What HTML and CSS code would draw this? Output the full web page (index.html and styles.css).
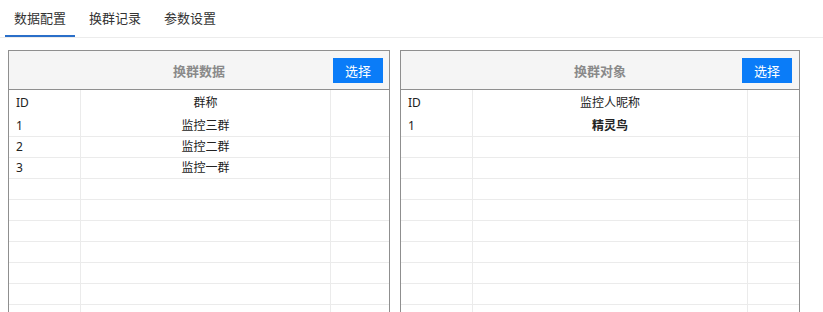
FILE: index.html
```html
<!DOCTYPE html>
<html>
<head>
  <link rel="stylesheet" href="styles.css">
</head>
<body>
  <div class="tabs">
    <div class="tab active">数据配置</div>
    <div class="tab">换群记录</div>
    <div class="tab">参数设置</div>
  </div>

  <div class="panels">
    <div class="panel panel-left">
      <div class="panel-head">
        <span class="panel-title">换群数据</span>
        <button class="btn">选择</button>
      </div>
      <div class="grid">
        <div class="row row-head"><div class="cell">ID</div><div class="cell center">群称</div><div class="cell"></div></div>
        <div class="row"><div class="cell">1</div><div class="cell center">监控三群</div><div class="cell"></div></div>
        <div class="row"><div class="cell">2</div><div class="cell center">监控二群</div><div class="cell"></div></div>
        <div class="row"><div class="cell">3</div><div class="cell center">监控一群</div><div class="cell"></div></div>
        <div class="row"><div class="cell"></div><div class="cell"></div><div class="cell"></div></div>
        <div class="row"><div class="cell"></div><div class="cell"></div><div class="cell"></div></div>
        <div class="row"><div class="cell"></div><div class="cell"></div><div class="cell"></div></div>
        <div class="row"><div class="cell"></div><div class="cell"></div><div class="cell"></div></div>
        <div class="row"><div class="cell"></div><div class="cell"></div><div class="cell"></div></div>
        <div class="row"><div class="cell"></div><div class="cell"></div><div class="cell"></div></div>
        <div class="row"><div class="cell"></div><div class="cell"></div><div class="cell"></div></div>
      </div>
    </div>

    <div class="panel panel-right">
      <div class="panel-head">
        <span class="panel-title">换群对象</span>
        <button class="btn">选择</button>
      </div>
      <div class="grid">
        <div class="row row-head"><div class="cell">ID</div><div class="cell center">监控人昵称</div><div class="cell"></div></div>
        <div class="row"><div class="cell">1</div><div class="cell center strong">精灵鸟</div><div class="cell"></div></div>
        <div class="row"><div class="cell"></div><div class="cell"></div><div class="cell"></div></div>
        <div class="row"><div class="cell"></div><div class="cell"></div><div class="cell"></div></div>
        <div class="row"><div class="cell"></div><div class="cell"></div><div class="cell"></div></div>
        <div class="row"><div class="cell"></div><div class="cell"></div><div class="cell"></div></div>
        <div class="row"><div class="cell"></div><div class="cell"></div><div class="cell"></div></div>
        <div class="row"><div class="cell"></div><div class="cell"></div><div class="cell"></div></div>
        <div class="row"><div class="cell"></div><div class="cell"></div><div class="cell"></div></div>
        <div class="row"><div class="cell"></div><div class="cell"></div><div class="cell"></div></div>
        <div class="row"><div class="cell"></div><div class="cell"></div><div class="cell"></div></div>
      </div>
    </div>
  </div>
</body>
</html>
```

FILE: styles.css
```css
html, body {
  height: 100%;
  overflow: hidden;
}
body {
  margin: 0;
  font-family: "Noto Sans", "Noto Sans CJK SC", sans-serif;
  color: #222;
  background: #fff;
}
.tabs {
  display: flex;
  gap: 5px;
  padding: 0 5px;
  height: 37px;
  border-bottom: 1px solid #ececec;
}
.tab {
  width: 70px;
  box-sizing: border-box;
  padding: 0 9px;
  font-size: 13px;
  line-height: 36px;
  color: #333;
  border-bottom: 2px solid transparent;
  height: 37px;
}
.tab.active {
  border-bottom-color: #2a6fc9;
}
.panels {
  display: flex;
  gap: 10px;
  padding: 12px 0 0 8px;
}
.panel {
  border: 1px solid #8f8f8f;
  box-sizing: border-box;
}
.panel-left {
  width: 382px;
}
.panel-right {
  width: 400px;
}
.panel-head {
  display: grid;
  grid-template-columns: 1fr auto 1fr;
  align-items: center;
  height: 38px;
  background: #f5f5f5;
  border-bottom: 1px solid #8f8f8f;
}
.panel-title {
  grid-column: 2;
  font-size: 13px;
  font-weight: bold;
  color: #8a8a8a;
}
.btn {
  grid-column: 3;
  justify-self: end;
  margin-right: 6px;
  width: 50px;
  height: 25px;
  padding: 0;
  border: none;
  background-color: #0a7cf8;
  color: #fff;
  font-family: inherit;
  font-size: 13px;
  cursor: pointer;
}
.panel-right .btn {
  margin-right: 7px;
}
.row {
  display: grid;
  box-sizing: border-box;
  height: 21px;
  border-bottom: 1px solid #ebebeb;
  font-size: 12px;
  line-height: 20px;
}
.panel-left .row {
  grid-template-columns: 72px 250px 1fr;
}
.panel-right .row {
  grid-template-columns: 72px 275px 1fr;
}
.row-head {
  height: 26px;
  line-height: 26px;
  border-bottom: none;
}
.cell {
  padding: 0 7px;
  border-right: 1px solid #ebebeb;
  white-space: nowrap;
  overflow: hidden;
}
.cell:last-child {
  border-right: none;
}
.center {
  text-align: center;
}
.strong {
  font-weight: 600;
}
```
